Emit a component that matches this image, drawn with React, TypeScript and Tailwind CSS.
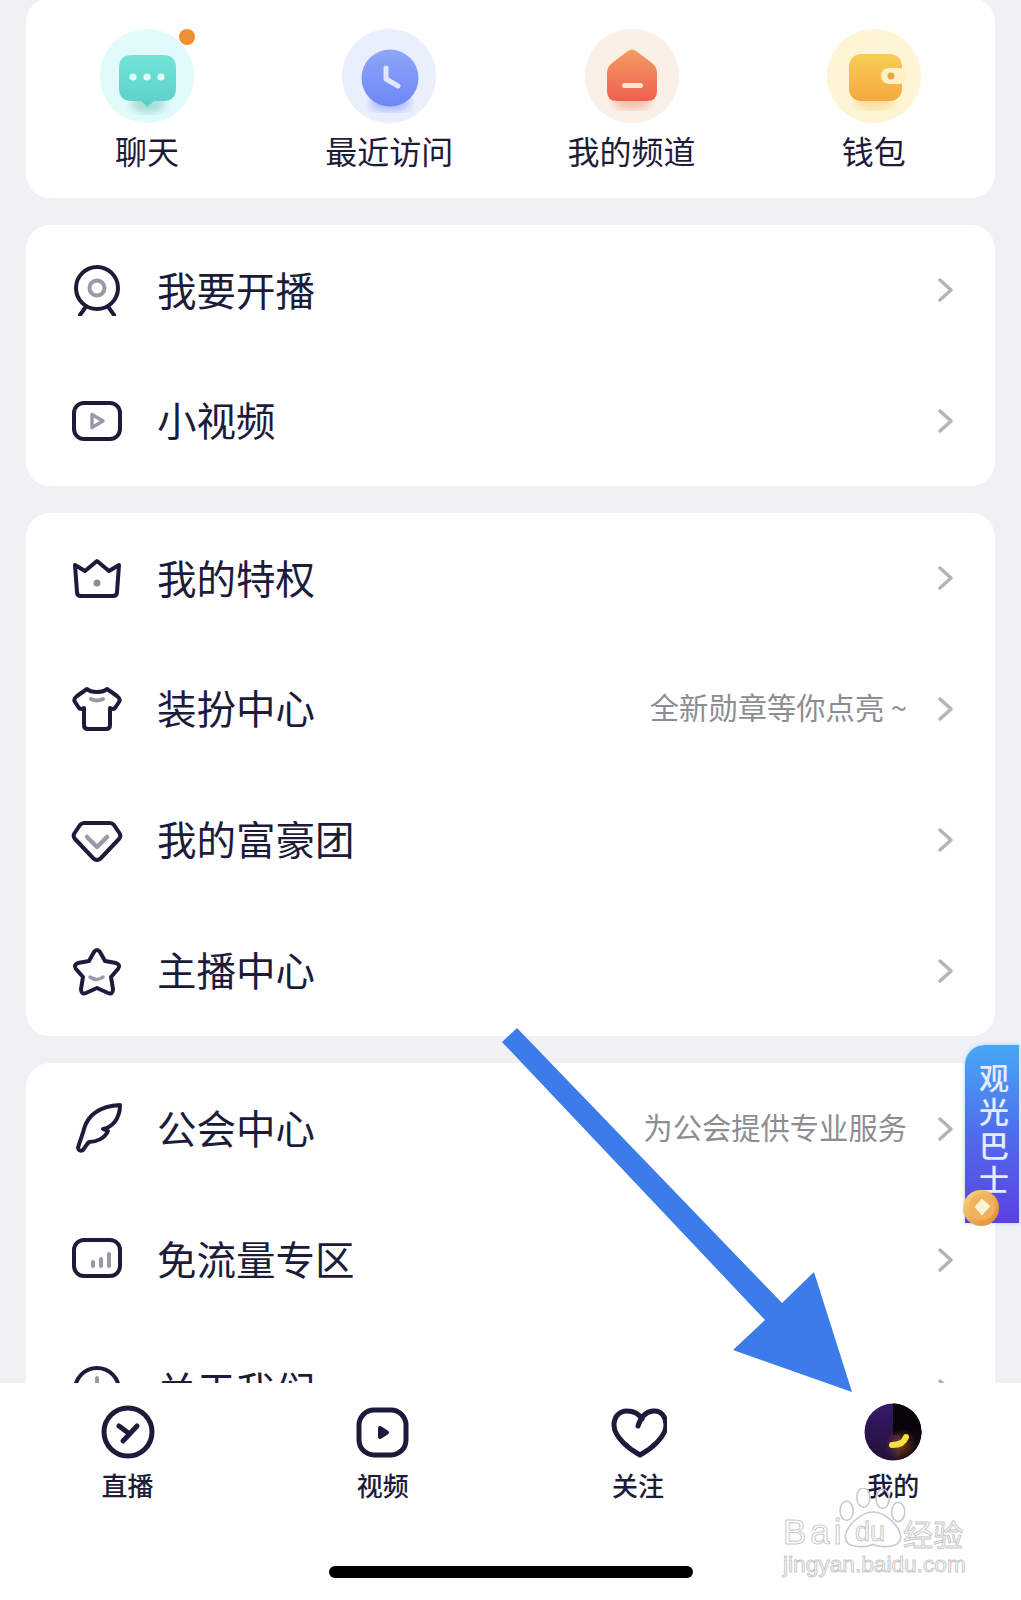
import type { ReactNode } from "react";

const ink = "#1c1c3a";
const soft = "#9a9aa6";

const Line = ({ children, dy = 0 }: { children: ReactNode; dy?: number }) => (
  <svg width="52" height="52" viewBox={`0 ${dy} 52 52`} fill="none" stroke={ink} strokeWidth="4" strokeLinecap="round" strokeLinejoin="round">
    {children}
  </svg>
);

const LiveIcon = () => (
  <Line dy={-1}>
    <circle cx="26" cy="23" r="21" />
    <circle cx="26" cy="23" r="7.5" stroke={soft} />
    <path d="M14 43L9 50M38 43L43 50" />
  </Line>
);

const VideoIcon = () => (
  <Line dy={1}>
    <rect x="3" y="9" width="46" height="36" rx="10" />
    <path d="M21 20.5L32 27L21 33.5Z" stroke={soft} strokeWidth="3.5" />
  </Line>
);

const CrownIcon = () => (
  <Line dy={-2}>
    <path d="M4 11L14 17L26 7L38 17L48 11L46 38Q46 42 42 42H10Q6 42 6 38Z" />
    <circle cx="26" cy="29" r="3.5" fill="#8f8f9c" stroke="none" />
  </Line>
);

const ShirtIcon = () => (
  <Line>
    <path d="M16 6C20 10 32 10 36 6L46 13Q50 16 48 19L44 25Q42 27 39 25V42Q39 46 35 46H17Q13 46 13 42V25Q10 27 8 25L4 19Q2 16 6 13Z" />
    <path d="M20 16Q26 19 32 16" stroke={soft} />
  </Line>
);

const DiamondIcon = () => (
  <Line>
    <path d="M13 9H39Q41 9 43 11L49 20Q50 23 48 25L30 44Q26 48 22 44L4 25Q2 23 3 20L9 11Q11 9 13 9Z" />
    <path d="M16 23L26 33L36 23" stroke={soft} strokeWidth="4.5" />
  </Line>
);

const StarIcon = () => (
  <Line>
    <path d="M23 7Q26 3 29 7L34 16L45 18Q50 20 47 24L40 32L42 44Q42 50 37 48L26 43L15 48Q10 50 10 44L12 32L5 24Q2 20 7 18L18 16Z" />
    <path d="M19 32Q26 37 32 32" stroke={soft} strokeWidth="3.5" />
  </Line>
);

const FeatherIcon = () => (
  <Line dy={2}>
    <path d="M49 4C34 5 18 10 13 28C11 36 8 42 7 47Q8 51 12 49C14 46 16 43 18 41C26 41 34 37 37 30L32 28C42 26 49 17 49 4Z" />
  </Line>
);

const ChartIcon = () => (
  <Line dy={2}>
    <rect x="3" y="8" width="46" height="36" rx="10" />
    <path d="M22 30V34M30 27V34M38 22V34" stroke={soft} />
  </Line>
);

const InfoIcon = () => (
  <Line dy={1}>
    <circle cx="26" cy="26" r="22" />
    <path d="M26 14V28" stroke={soft} />
  </Line>
);

const Chevron = () => (
  <svg width="16" height="24" viewBox="0 0 16 24" fill="none" stroke="#b4b4b6" strokeWidth="3.5" strokeLinecap="round" strokeLinejoin="round" className="shrink-0">
    <path d="M2 2L13 12L2 22" />
  </svg>
);

const ChatBadge = () => (
  <svg width="94" height="94" viewBox="0 0 94 94">
    <defs>
      <linearGradient id="chat" x1="0" y1="0" x2="0" y2="1">
        <stop offset="0" stopColor="#72e4d5" />
        <stop offset="1" stopColor="#5ccfcb" />
      </linearGradient>
      <filter id="blur1"><feGaussianBlur stdDeviation="4" /></filter>
    </defs>
    <circle cx="47" cy="47" r="47" fill="#e0fbf9" />
    <ellipse cx="48" cy="74" rx="17" ry="10" fill="#a9dcd8" filter="url(#blur1)" />
    <path d="M32 26H63Q76 26 76 39V59Q76 72 63 72H54L47.5 78L41 72H32Q19 72 19 59V39Q19 26 32 26Z" fill="url(#chat)" />
    <circle cx="33" cy="48" r="3.6" fill="#dffbf7" />
    <circle cx="47" cy="48" r="3.6" fill="#dffbf7" />
    <circle cx="61" cy="48" r="3.6" fill="#dffbf7" />
  </svg>
);

const ClockBadge = () => (
  <svg width="94" height="94" viewBox="0 0 94 94">
    <defs>
      <linearGradient id="clock" x1="0" y1="0" x2="0" y2="1">
        <stop offset="0" stopColor="#8fa6f8" />
        <stop offset="1" stopColor="#6d86f5" />
      </linearGradient>
      <filter id="blur2"><feGaussianBlur stdDeviation="4" /></filter>
    </defs>
    <circle cx="47" cy="47" r="47" fill="#e9effc" />
    <ellipse cx="48" cy="74" rx="20" ry="8" fill="#a9b8f8" filter="url(#blur2)" />
    <circle cx="48" cy="49" r="28.5" fill="url(#clock)" />
    <path d="M44 39V50L56 57" fill="none" stroke="#dfe6fd" strokeWidth="5" strokeLinecap="round" strokeLinejoin="round" />
  </svg>
);

const HouseBadge = () => (
  <svg width="94" height="94" viewBox="0 0 94 94">
    <defs>
      <linearGradient id="house" x1="0" y1="0" x2="0" y2="1">
        <stop offset="0" stopColor="#f49c60" />
        <stop offset="1" stopColor="#ee5f50" />
      </linearGradient>
      <filter id="blur3"><feGaussianBlur stdDeviation="4" /></filter>
    </defs>
    <circle cx="47" cy="47" r="47" fill="#fbf0e8" />
    <ellipse cx="47" cy="73" rx="19" ry="7" fill="#f7b9a6" filter="url(#blur3)" />
    <path d="M43 22Q47 19 51 22L67 34Q72 38 72 44V62Q72 72 62 72H32Q22 72 22 62V44Q22 38 27 34Z" fill="url(#house)" />
    <rect x="37" y="54" width="21" height="5" rx="2.5" fill="#fde9d5" />
  </svg>
);

const WalletBadge = () => (
  <svg width="94" height="94" viewBox="0 0 94 94">
    <defs>
      <linearGradient id="wallet" x1="0" y1="0" x2="0" y2="1">
        <stop offset="0" stopColor="#f8cd55" />
        <stop offset="1" stopColor="#f4a93f" />
      </linearGradient>
      <filter id="blur4"><feGaussianBlur stdDeviation="4" /></filter>
    </defs>
    <circle cx="47" cy="47" r="47" fill="#fdf5d3" />
    <ellipse cx="48" cy="73" rx="19" ry="7" fill="#f9dc96" filter="url(#blur4)" />
    <rect x="22" y="25" width="53" height="47" rx="12" fill="url(#wallet)" />
    <rect x="54" y="39" width="26" height="16" rx="8" fill="#fdf0c4" />
    <circle cx="64" cy="47" r="3.5" fill="#e3a64b" />
  </svg>
);

const Tab = ({ label, children }: { label: string; children: ReactNode }) => (
  <div className="flex flex-col items-center">
    <div className="flex h-[58px] w-[58px] items-center justify-center">{children}</div>
    <span className="mt-[9px] text-[26px] leading-[30px] font-medium text-[#1c1c3a]">{label}</span>
  </div>
);

const Row = ({ icon, title, note, h }: { icon: ReactNode; title: string; note?: string; h: string }) => (
  <div className={`flex items-center pr-[41px] pl-[45px] ${h}`}>
    {icon}
    <span className="ml-[34px] flex-1 pb-[4px] text-[39.5px] leading-none text-[#1c1c3a]">{title}</span>
    {note && <span className="mr-[31px] pb-[4px] text-[29.3px] leading-none text-[#8d8d91]">{note}</span>}
    <Chevron />
  </div>
);

const shortcuts = [
  { label: "聊天", badge: <ChatBadge />, dot: true },
  { label: "最近访问", badge: <ClockBadge /> },
  { label: "我的频道", badge: <HouseBadge /> },
  { label: "钱包", badge: <WalletBadge /> },
];

export default function App() {
  return (
    <div className="relative flex h-[1600px] w-[1021px] flex-col overflow-hidden bg-[#eff1f5] font-['Noto_Sans_CJK_SC','Noto_Sans',sans-serif]">
      <div className="flex min-h-0 flex-1 flex-col gap-[27px] overflow-hidden px-[26px]">
        <div className="-mt-[2px] grid h-[200px] shrink-0 grid-cols-4 rounded-[24px] bg-white pt-[31px]">
          {shortcuts.map((s) => (
            <div key={s.label} className="flex flex-col items-center">
              <div className="relative">
                {s.badge}
                {s.dot && <span className="absolute top-0 right-[-1px] h-4 w-4 rounded-full bg-[#ef8f2f]" />}
              </div>
              <span className="mt-[7px] text-[32px] leading-[40px] text-[#1c1c3a]">{s.label}</span>
            </div>
          ))}
        </div>

        <div className="shrink-0 rounded-[24px] bg-white">
          <Row h="h-[130.5px]" icon={<LiveIcon />} title="我要开播" />
          <Row h="h-[130.5px]" icon={<VideoIcon />} title="小视频" />
        </div>

        <div className="shrink-0 rounded-[24px] bg-white">
          <Row h="h-[130.75px]" icon={<CrownIcon />} title="我的特权" />
          <Row h="h-[130.75px]" icon={<ShirtIcon />} title="装扮中心" note="全新勋章等你点亮 ~" />
          <Row h="h-[130.75px]" icon={<DiamondIcon />} title="我的富豪团" />
          <Row h="h-[130.75px]" icon={<StarIcon />} title="主播中心" />
        </div>

        <div className="shrink-0 rounded-[24px] bg-white">
          <Row h="h-[131px]" icon={<FeatherIcon />} title="公会中心" note="为公会提供专业服务" />
          <Row h="h-[131px]" icon={<ChartIcon />} title="免流量专区" />
          <Row h="h-[131px]" icon={<InfoIcon />} title="关于我们" />
        </div>
      </div>

      <div className="relative h-[217px] shrink-0 bg-white">
        <div className="grid grid-cols-4 pt-[20px]">
          <Tab label="直播">
            <svg width="58" height="58" viewBox="0 0 58 58" fill="none" stroke={ink} strokeWidth="5" strokeLinecap="round" strokeLinejoin="round">
              <circle cx="29" cy="29" r="24" />
              <path d="M20 23L28 29M38 23L24 38" />
            </svg>
          </Tab>
          <Tab label="视频">
            <svg width="58" height="58" viewBox="0 0 58 58" fill="none" stroke={ink} strokeWidth="5" strokeLinejoin="round">
              <rect x="5" y="7" width="47" height="45" rx="15" />
              <path d="M26 25L33 29.5L26 34Z" fill={ink} strokeWidth="4" />
            </svg>
          </Tab>
          <Tab label="关注">
            <svg width="58" height="58" viewBox="-2 0 58 58" fill="none" stroke={ink} strokeWidth="5" strokeLinecap="round" strokeLinejoin="round">
              <path d="M27 23C29 16 33 9 42 8C51 7 55 15 55 22C55 34 40 46 29 52C18 46 3 34 3 22C3 14 8 8 16 8C24 8 28 11 31 16" />
            </svg>
          </Tab>
          <Tab label="我的">
            <svg width="58" height="58" viewBox="0 0 58 58">
              <defs>
                <linearGradient id="night" x1="0" y1="0" x2="0" y2="1">
                  <stop offset="0" stopColor="#361a68" />
                  <stop offset="1" stopColor="#220f3a" />
                </linearGradient>
                <radialGradient id="glow" cx="0.5" cy="0.5" r="0.5">
                  <stop offset="0" stopColor="#a8571c" stopOpacity="0.7" />
                  <stop offset="1" stopColor="#a8571c" stopOpacity="0" />
                </radialGradient>
                <clipPath id="face"><circle cx="29" cy="29" r="28.5" /></clipPath>
              </defs>
              <g clipPath="url(#face)">
                <rect width="58" height="58" fill="url(#night)" />
                <rect x="29" width="29" height="32" fill="#07040c" />
                <rect x="36" y="28" width="22" height="30" fill="#0c0610" />
                <circle cx="37" cy="42" r="16" fill="url(#glow)" />
                <path d="M28 42C34 42 40 40 42 34" fill="none" stroke="#f6e03c" strokeWidth="6" strokeLinecap="round" />
              </g>
            </svg>
          </Tab>
        </div>
        <div className="absolute top-[183px] left-[329px] h-3 w-[364px] rounded-full bg-black" />
      </div>

      {/* annotation arrow drawn over the screenshot */}
      <svg className="pointer-events-none absolute top-0 left-0" width="1021" height="1600" viewBox="0 0 1021 1600">
        <polygon points="517,1028 502,1042 765,1320 733,1350 852,1392 814,1272 782,1303" fill="#3b7bea" />
      </svg>

      {/* floating bus badge */}
      <div className="absolute top-[1045px] left-[965px] flex h-[178px] w-[54px] flex-col items-center rounded-tl-[20px] bg-gradient-to-b from-[#45a8f4] via-[#4f6cec] to-[#5b3fe0] pt-[14px] pl-[4px] shadow-[0_0_4px_#9fd0fa]">
        {["观", "光", "巴", "士"].map((c) => (
          <span key={c} className="text-[30px] leading-[34px] font-medium text-[#e6ecff]">{c}</span>
        ))}
      </div>
      <svg className="absolute top-[1189px] left-[962px]" width="38" height="38" viewBox="0 0 38 38">
        <defs>
          <linearGradient id="coin" x1="0" y1="0" x2="1" y2="1">
            <stop offset="0" stopColor="#f8d98a" />
            <stop offset="1" stopColor="#e0862a" />
          </linearGradient>
        </defs>
        <circle cx="19" cy="19" r="18" fill="url(#coin)" />
        <circle cx="20" cy="18" r="13" fill="#eeb35c" />
        <path d="M20 11L27 17L20 25L14 18Z" fill="#fdf1d6" stroke="#fdf1d6" strokeWidth="2" strokeLinejoin="round" />
      </svg>

      {/* baidu watermark */}
      <div className="pointer-events-none absolute top-[1488px] left-[783px] h-[92px] w-[190px] font-['Liberation_Sans',sans-serif] text-transparent [-webkit-text-stroke:1px_#c9c9c9]">
        <svg className="absolute top-0 left-[54px]" width="72" height="60" viewBox="0 0 60 50" fill="none" stroke="#c9c9c9" strokeWidth="1.3">
          <ellipse cx="8" cy="19" rx="5.5" ry="8" />
          <ellipse cx="22" cy="8" rx="5.5" ry="8" />
          <ellipse cx="38" cy="9" rx="5.5" ry="8" />
          <ellipse cx="51" cy="20" rx="5.5" ry="8" />
          <path d="M30 20C20 20 7 32 7 41C7 50 22 50 30 47C38 50 53 50 53 41C53 32 40 20 30 20Z" />
        </svg>
        <span className="absolute top-[26px] left-0 text-[35px] leading-none tracking-[4px]">Bai</span>
        <span className="absolute top-[31px] left-[72px] text-[27px] leading-none">du</span>
        <span className="absolute top-[30px] left-[120px] font-['Noto_Sans_CJK_SC',sans-serif] text-[30px] leading-none">经验</span>
        <span className="absolute top-[65px] left-0 text-[22.7px] leading-none whitespace-nowrap">jingyan.baidu.com</span>
      </div>
    </div>
  );
}
